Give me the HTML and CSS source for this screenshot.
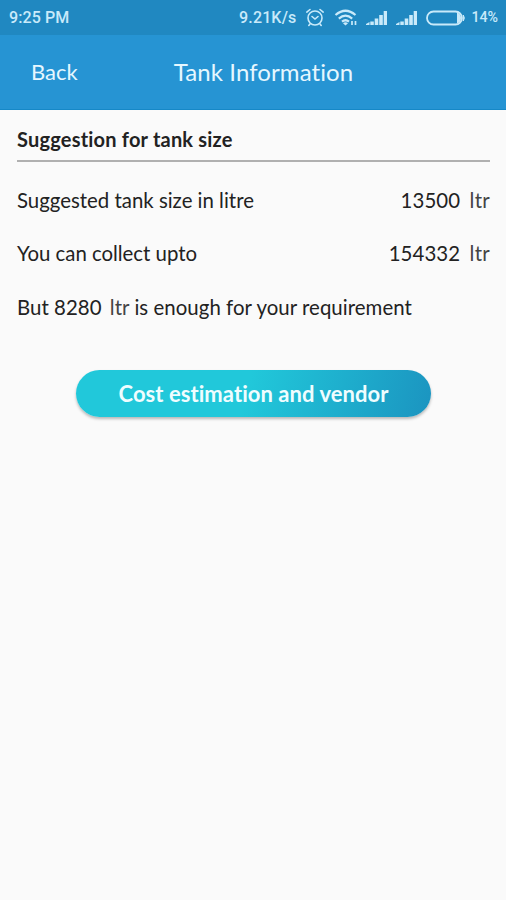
FILE: index.html
```
<!DOCTYPE html>
<html lang="en">
<head>
<meta charset="utf-8">
<title>Tank Information</title>
<link rel="stylesheet" href="styles.css">
</head>
<body>
<div class="status">
  <span class="time">9:25 PM</span>
  <span class="speed">9.21K/s</span>
  <svg class="alarm" width="20" height="20" viewBox="0 0 20 20" fill="none" stroke="currentColor" stroke-width="1.6" stroke-linecap="round"><circle cx="10" cy="10" r="7"/><path d="M7 8.500l3 2.500L13 8.500M1.800 4.100L5 1.500M18.200 4.100L15 1.500M5 16l-1.200 1.500M15 16l1.200 1.500"/></svg>
  <svg class="wifi" width="24" height="18" viewBox="0 0 24 18" fill="none" stroke="currentColor" stroke-width="2.200"><path d="M1.500 6Q11.500 -2.500 21.500 6M4.800 9.600Q11.500 3.800 18.200 9.600M8 12.700Q11.500 9.800 15 12.700"/><path d="M9 14.200Q11.500 12.400 14 14.200L11.500 16.500z" fill="currentColor" stroke="none"/><path d="M18 12v4M21.500 12v4" stroke-width="1.700"/></svg>
  <svg class="signal" width="22" height="16" viewBox="0 0 22 16" fill="currentColor"><path d="M0 15v-1l3.500-2v3zM4.300 11.500h3.500V15H4.300zM8.700 8.500h3.600V15H8.700zM13.200 5h3.600v10h-3.600zM17.700 1H21v14h-3.300z"/></svg>
  <svg class="signal" width="22" height="16" viewBox="0 0 22 16" fill="currentColor"><path d="M0 15v-1l3.500-2v3zM4.300 11.500h3.500V15H4.300zM8.700 8.500h3.600V15H8.700zM13.200 5h3.600v10h-3.600zM17.700 1H21v14h-3.300z"/></svg>
  <svg class="battery" width="40" height="16" viewBox="0 0 40 16"><rect x="1" y="1.500" width="35" height="13" rx="6.500" fill="none" stroke="currentColor" stroke-width="1.800"/><path d="M31 2.500q4 1 4 5.500t-4 5.500z" fill="currentColor"/><path d="M37.300 5q2 3 0 6z" fill="currentColor" stroke="currentColor"/></svg>
  <span class="percent">14%</span>
</div>
<header class="bar">
  <span class="back">Back</span>
  <h1 class="title">Tank Information</h1>
</header>
<main class="content">
  <h2 class="heading">Suggestion for tank size</h2>
  <div class="row"><span>Suggested tank size in litre</span><span class="value">13500 <span class="unit">ltr</span></span></div>
  <div class="row"><span class="collect">You can collect upto</span><span class="value">154332 <span class="unit">ltr</span></span></div>
  <div class="row"><span class="enough">But 8280 <span class="unit">ltr</span> is enough for your requirement</span></div>
  <button class="action">Cost estimation and vendor</button>
</main>
</body>
</html>
```
FILE: styles.css
```
* { box-sizing: border-box; }
body { margin: 0; min-height: 900px; background: #fafafa; color: #222; font-family: Lato, sans-serif; font-variant-ligatures: none; }
.status { height: 35px; padding: 0 8px 0 9px; display: flex; align-items: center; background: #2088c1; color: #c9eafa; font: 500 16px/35px Roboto, sans-serif; }
.time { letter-spacing: .1px; }
.speed { margin-left: auto; letter-spacing: .15px; }
.alarm { margin-left: 9px; }
.wifi { margin-left: 9px; }
.signal { margin-left: 8px; }
.battery { margin-left: 8px; }
.percent { margin-left: 5px; font-size: 14.200px; }
.bar { height: 75px; padding: 0 31px 2px; display: grid; grid-template-columns: 1fr auto 1fr; align-items: center; background: #2694d3; border-bottom: 1px solid #1688c7; color: #e5f7ff; }
.back { font-size: 22px; }
.title { margin: 0 0 0 21px; font-size: 24px; font-weight: 400; letter-spacing: .08px; }
.content { padding: 0 16px 0 17px; display: flex; flex-direction: column; }
.heading { height: 52px; margin: 0 0 11px; border-bottom: 2px solid #b0b0b0; font-size: 20px; line-height: 59px; letter-spacing: .2px; }
.row { height: 53.500px; display: flex; justify-content: space-between; align-items: center; font-size: 20.400px; white-space: nowrap; }
.collect { letter-spacing: -.02px; }
.enough { letter-spacing: .05px; }
.value { letter-spacing: .1px; }
.unit { margin-left: 3px; color: #444; }
.value .unit { margin-left: 4px; letter-spacing: .3px; }
.action { align-self: center; width: 355px; height: 47px; margin-top: 36px; padding: 0; border: 0; border-radius: 24px; background: linear-gradient(105deg, #21c8da 0%, #21c8da 48%, #1b94c0 100%); box-shadow: 0 2px 3px #0004; color: #effdff; font: 700 22px Lato, sans-serif; font-variant-ligatures: none; letter-spacing: .05px; }
```
